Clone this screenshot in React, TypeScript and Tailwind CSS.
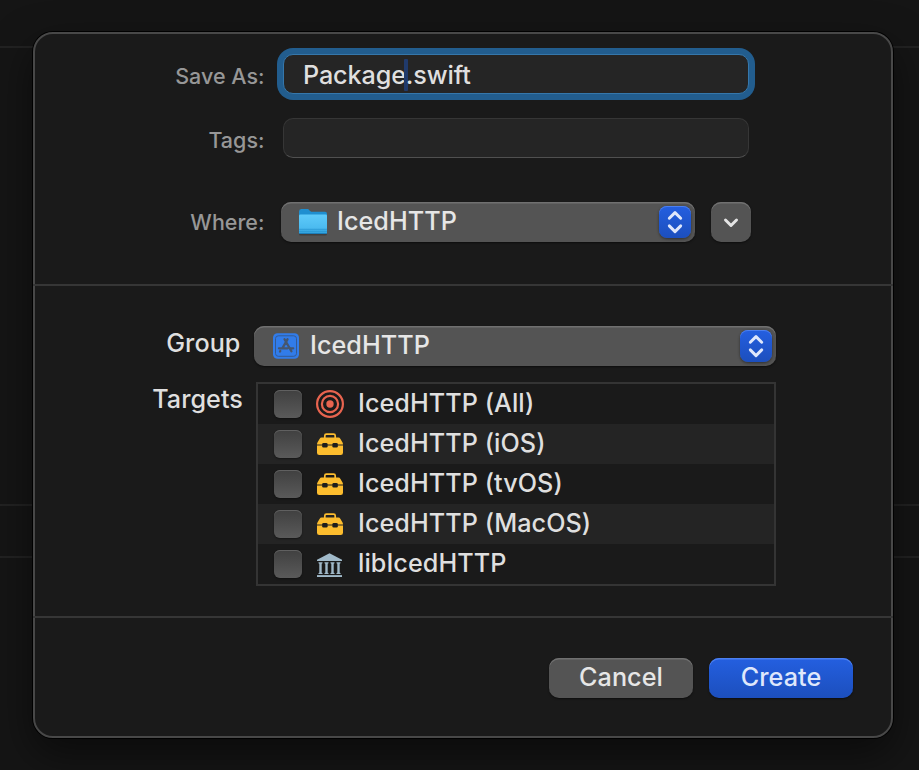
import type { ReactNode } from "react";

const FONT = "whitespace-nowrap text-[25.2px] font-[450] leading-[38px]";
const TEXT = `${FONT} tracking-[0.05px]`;
const LABEL = "whitespace-nowrap text-right text-[21.5px] font-[490] leading-[40px] text-[#979797]";

function Stepper() {
  return (
    <span className="flex h-8 w-8 shrink-0 items-center justify-center rounded-[8px] bg-linear-to-b from-[#245fe0] to-[#1c4fbd] shadow-[inset_0_1px_0_#4b7ff0,0_1px_3px_rgba(0,0,0,0.45)]">
      <svg width="32" height="32" viewBox="0 0 32 32" fill="none" stroke="#dfe7fb" strokeWidth="2.9" strokeLinecap="round" strokeLinejoin="round">
        <path d="M10.300 12.300 16 6.600l5.700 5.700M10.300 19.900 16 25.600l5.700-5.700" />
      </svg>
    </span>
  );
}

function Popup({ className, children }: { className: string; children: ReactNode }) {
  return (
    <div className={`flex h-10 items-center rounded-[10px] bg-[#545454] pr-1 text-[#e6e6e6] shadow-[inset_0_1.5px_0_#707070,0_1px_2px_rgba(0,0,0,0.5)] ${className}`}>
      {children}
      <span className="flex-1" />
      <Stepper />
    </div>
  );
}

function FolderIcon() {
  return (
    <svg className="shrink-0" width="30" height="30" viewBox="0 0 30 30">
      <defs>
        <linearGradient id="folder" x1="0" y1="0" x2="0" y2="1">
          <stop offset="0" stopColor="#5fcbfa" />
          <stop offset="0.75" stopColor="#49b9ef" />
          <stop offset="1" stopColor="#2b9cd8" />
        </linearGradient>
      </defs>
      <rect x="1" y="24" width="28" height="4.500" rx="1.500" fill="#333" opacity=".6" />
      <path d="M1 4.500Q1 2 3.200 2h6.300c1.800 0 2.300 2.800 4.500 2.800h13Q29 4.800 29 7v18H1z" fill="#1f8fd0" />
      <path d="M1 8.600Q1 7.500 2.500 7.500h25Q29 7.500 29 8.600V25.500Q29 27 27.500 27h-25Q1 27 1 25.500z" fill="url(#folder)" />
      <path d="M1 22.300h28M1 24.300h28" stroke="#2794d1" strokeWidth=".8" />
      <path d="M1.500 26.500h27" stroke="#1d7fba" strokeWidth="1" />
    </svg>
  );
}

function AppIcon() {
  return (
    <svg className="shrink-0" width="26" height="26" viewBox="0 0 26 26">
      <rect y=".3" width="26" height="25.500" rx="4.500" fill="#317cea" />
      <rect x="2.500" y="2.800" width="21" height="20.500" rx="2.800" fill="none" stroke="#345a94" strokeWidth="1" />
      <g fill="none" stroke="#45566f" strokeWidth="2.300" strokeLinecap="round">
        <path d="m11.500 6.300 6.900 12M14.500 6.300 9.300 15.300M6 15.300h8.600M17.600 15.300h2.600M7.300 18l-.3.500" />
      </g>
    </svg>
  );
}

function TargetIcon() {
  return (
    <svg width="28" height="28" viewBox="0 0 28 28" fill="none" stroke="#e8644f" strokeWidth="2.200">
      <circle cx="14" cy="14" r="12.900" />
      <circle cx="14" cy="14" r="8.100" />
      <circle cx="14" cy="14" r="3.700" fill="#e8644f" stroke="none" />
    </svg>
  );
}

function ToolboxIcon() {
  return (
    <svg width="28" height="28" viewBox="0 0 28 28" fill="#fdbd2e">
      <path d="M8.800 8V5.800Q8.800 4.200 10.400 4.200h7.200Q19.200 4.200 19.200 5.800V8" fill="none" stroke="#fdbd2e" strokeWidth="1.700" />
      <path d="M5.600 7.500h16.800q1.300 0 1.900 1.200l2.100 3.600q.6 1 .6 2.200H1q0-1.200.6-2.200l2.100-3.600q.6-1.200 1.900-1.200z" />
      <path d="M1 15.600h26v7.100q0 2.300-2.300 2.300H3.300Q1 25 1 22.700z" />
      <g fill="#1d1d1d">
        <rect x="6.200" y="12.900" width="5.400" height="4.700" rx="1.300" />
        <rect x="16.400" y="12.900" width="5.400" height="4.700" rx="1.300" />
      </g>
    </svg>
  );
}

function LibraryIcon() {
  return (
    <svg width="28" height="28" viewBox="0 0 28 28" fill="#a0b9c9">
      <path d="M13.500 3.200 26 9.800v1.300H1V9.800z" />
      <path d="M2.500 12.300h4v1l-.8.400v9l.8.400v1h-4v-1l.8-.4v-9l-.8-.4zM8.500 12.300h4v1l-.8.400v9l.8.400v1h-4v-1l.8-.4v-9l-.8-.4zM14.500 12.300h4v1l-.8.400v9l.8.400v1h-4v-1l.8-.4v-9l-.8-.4zM20.500 12.300h4v1l-.8.400v9l.8.400v1h-4v-1l.8-.4v-9l-.8-.4z" />
      <path d="M1 25.100h25v1.900H1z" />
    </svg>
  );
}

const targets = [
  { name: "IcedHTTP (All)", icon: <TargetIcon /> },
  { name: "IcedHTTP (iOS)", icon: <ToolboxIcon /> },
  { name: "IcedHTTP (tvOS)", icon: <ToolboxIcon /> },
  { name: "IcedHTTP (MacOS)", icon: <ToolboxIcon /> },
  { name: "libIcedHTTP", icon: <LibraryIcon /> },
];

export default function App() {
  return (
    <div className="relative h-[770px] w-[919px] overflow-hidden bg-[#151515] font-['Inter','Liberation_Sans',sans-serif] text-[#dfdfdf]">
      <div className="absolute inset-0 pt-[46px]">
        <div className="h-[2px] bg-[#222222]" />
        <div className="mt-[456px] h-[2px] bg-[#222222]" />
        <div className="mt-[50px] h-[2px] bg-[#222222]" />
      </div>
      <div className="relative ml-[33px] mt-[32px] h-[706px] w-[860px] rounded-[20px] border-2 border-[#484848] bg-[#1a1a1a] shadow-[0_0_0_1px_#000,0_16px_40px_rgba(0,0,0,0.5)]">
        <section className="h-[250px] pt-5">
          <div className="flex h-10">
            <div className={`w-[229.500px] ${LABEL}`}>
              <div className="pt-[2px]">Save As:</div>
            </div>
            <div className="ml-[18.500px] h-10 w-[466px] rounded-[10px] border border-[#3577ab] bg-[#252525] pl-[19px] pt-[1px] shadow-[0_0_0_6px_#225d8e]">
              <div className={`flex items-center tracking-[-0.12px] ${FONT}`}>
                <span>Package</span>
                <span className="-mx-[2px] h-8 w-1 shrink-0 rounded-[1px] bg-[#203a6b]" />
                <span className="relative">.swift</span>
              </div>
            </div>
          </div>
          <div className="mt-6 flex h-10">
            <div className={`w-[229.500px] ${LABEL}`}>
              <div className="pt-[2px]">Tags:</div>
            </div>
            <div className="ml-[18.500px] h-10 w-[466px] rounded-[10px] border border-[#363636] border-b-[#505050] bg-[#252525]" />
          </div>
          <div className="mt-11 flex h-10">
            <div className={`w-[229.500px] ${LABEL}`}>Where:</div>
            <Popup className="ml-[16.500px] w-[414px] pl-[17px]">
              <FolderIcon />
              <span className={`ml-[9px] pb-[2px] ${TEXT}`}>IcedHTTP</span>
            </Popup>
            <div className="ml-4 flex h-10 w-10 items-center justify-center rounded-[10px] bg-[#545454] shadow-[inset_0_1.5px_0_#707070,0_1px_2px_rgba(0,0,0,0.5)]">
              <svg width="40" height="40" viewBox="0 0 40 40" fill="none" stroke="#e4e4e4" strokeWidth="3" strokeLinecap="round" strokeLinejoin="round">
                <path d="m14.500 18 5.500 5.500 5.500-5.500" />
              </svg>
            </div>
          </div>
        </section>
        <div className="-mx-[2px] h-[2px] bg-[#363636]" />
        <section className="h-[330px] pt-10">
          <div className="flex h-10">
            <div className={`-mt-[2px] w-[205.500px] text-right ${TEXT}`}>Group</div>
            <Popup className="ml-[13.500px] w-[522px] pl-[19px]">
              <AppIcon />
              <span className={`ml-[11px] pb-[2px] ${TEXT}`}>IcedHTTP</span>
            </Popup>
          </div>
          <div className="mt-4 flex">
            <div className={`-mt-[2px] w-[208px] text-right ${TEXT}`}>Targets</div>
            <ul className="ml-[13px] w-[520px] border-2 border-[#343434]">
              {targets.map((t) => (
                <li key={t.name} className="flex h-10 items-center pl-4 even:bg-[#242424]">
                  <span className="h-7 w-7 rounded-[6px] bg-linear-to-b from-[#404040] to-[#5a5a5a] shadow-[inset_0_1px_0_#606060,0_1px_2px_rgba(0,0,0,0.4)]" />
                  <span className="ml-[14px] h-7 w-7">{t.icon}</span>
                  <span className={`ml-[14px] pb-[2px] ${TEXT}`}>{t.name}</span>
                </li>
              ))}
            </ul>
          </div>
        </section>
        <div className="-mx-[2px] h-[2px] bg-[#363636]" />
        <footer className="flex justify-end gap-4 pr-[38px] pt-10">
          <button className={`h-10 w-36 rounded-[10px] bg-[#545454] pb-[2px] text-[#e6e6e6] shadow-[inset_0_1.5px_0_#707070,0_1px_2px_rgba(0,0,0,0.5)] ${TEXT}`}>Cancel</button>
          <button className={`h-10 w-36 rounded-[10px] bg-linear-to-b from-[#245fe0] to-[#1c4fbd] pb-[2px] text-[#dfe7fb] shadow-[inset_0_1.5px_0_#4b7ff0,0_1px_2px_rgba(0,0,0,0.5)] ${TEXT}`}>Create</button>
        </footer>
      </div>
    </div>
  );
}
